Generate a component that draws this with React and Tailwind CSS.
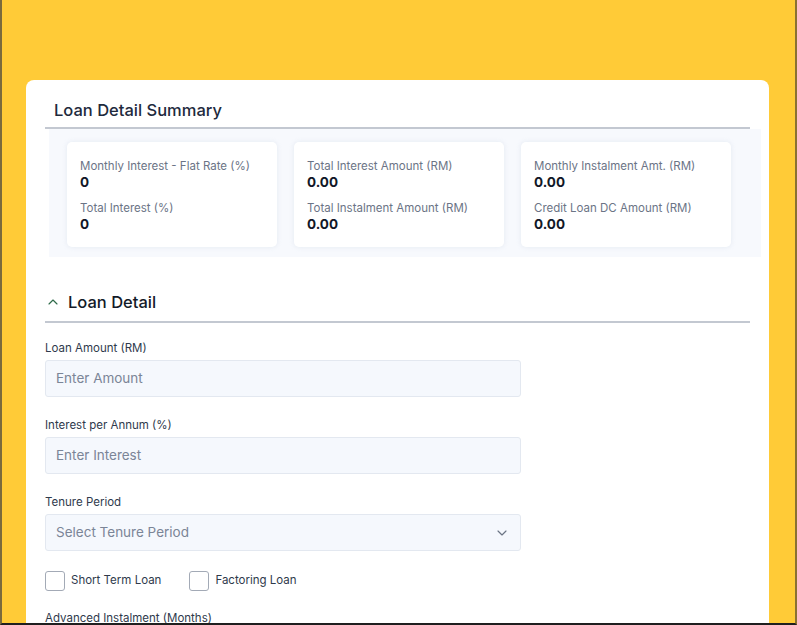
import React from "react";
import { ChevronUp, ChevronDown } from "lucide-react";

const summary = [
  [
    { label: "Monthly Interest - Flat Rate (%)", value: "0" },
    { label: "Total Interest (%)", value: "0" },
  ],
  [
    { label: "Total Interest Amount (RM)", value: "0.00" },
    { label: "Total Instalment Amount (RM)", value: "0.00" },
  ],
  [
    { label: "Monthly Instalment Amt. (RM)", value: "0.00" },
    { label: "Credit Loan DC Amount (RM)", value: "0.00" },
  ],
];

function Field({ label, placeholder, select }) {
  return (
    <div className="mb-[20px]">
      <p className="text-[11.5px] leading-4 text-[#2f3a4c] mb-[4px]">{label}</p>
      <div className="w-[476px] h-[37px] flex items-center justify-between px-[10px] bg-[#f5f8fd] border border-[#e3e8f0] rounded-[3px]">
        <span className="text-[13.5px] text-[#7b8597]">{placeholder}</span>
        {select && <ChevronDown size={16} strokeWidth={1.75} className="text-[#6b7484]" />}
      </div>
    </div>
  );
}

export default function App() {
  return (
    <div
      className="h-[625px] overflow-hidden bg-[#ffcb37] border-l-2 border-r-2 border-b-2 border-l-[#7a6a3c] border-r-[#8a7232] border-b-[#1f1f1f] pt-[80px] pl-[24px] pr-[26px]"
      style={{ fontFamily: "Inter, 'Noto Sans', sans-serif" }}
    >
      <div className="bg-white rounded-lg px-[19px] h-[700px]">
        <div className="pt-[18px] pb-[5px] pl-[9px] border-b-2 border-[#c3c8d1]">
          <h1 className="text-[16.5px] leading-6 text-[#1e2a3d] font-medium">Loan Detail Summary</h1>
        </div>

        <div className="ml-[4px] -mr-[11px] bg-[#f7f9fd] pl-[18px] pr-[30px] pt-[13px] pb-[10px]">
          <div className="grid grid-cols-3 gap-[17px]">
            {summary.map((col, i) => (
              <div key={i} className="bg-white rounded-[5px] shadow-[0_0_5px_rgba(205,214,228,0.45)] pl-[13px] pt-[16px] pb-[15px]">
                {col.map((item, j) => (
                  <div key={j} className={j ? "mt-[10px]" : ""}>
                    <p className="text-[11.5px] leading-4 text-[#6b7486]">{item.label}</p>
                    <p className="text-[13.5px] leading-4 font-bold text-[#111827]">{item.value}</p>
                  </div>
                ))}
              </div>
            ))}
          </div>
        </div>

        <div className="mt-[33px] pb-[7px] border-b-2 border-[#c3c8d1] flex items-center gap-[7px]">
          <ChevronUp size={16} strokeWidth={1.75} className="text-[#2f6b4a]" />
          <h2 className="text-[16.5px] leading-6 text-[#131a28] font-medium">Loan Detail</h2>
        </div>

        <div className="mt-[17px]">
          <Field label="Loan Amount (RM)" placeholder="Enter Amount" />
          <Field label="Interest per Annum (%)" placeholder="Enter Interest" />
          <Field label="Tenure Period" placeholder="Select Tenure Period" select />

          <div className="flex items-center gap-[28px] mt-[19px]">
            <label className="flex items-center gap-[6px]">
              <span className="w-[20px] h-[20px] rounded-[3px] border border-[#a3aab6]" />
              <span className="text-[11.5px] text-[#2f3a4c]">Short Term Loan</span>
            </label>
            <label className="flex items-center gap-[6px]">
              <span className="w-[20px] h-[20px] rounded-[3px] border border-[#a3aab6]" />
              <span className="text-[11.5px] text-[#2f3a4c]">Factoring Loan</span>
            </label>
          </div>

          <p className="mt-[19px] text-[11.5px] leading-4 text-[#2f3a4c]">Advanced Instalment (Months)</p>
        </div>
      </div>
    </div>
  );
}
